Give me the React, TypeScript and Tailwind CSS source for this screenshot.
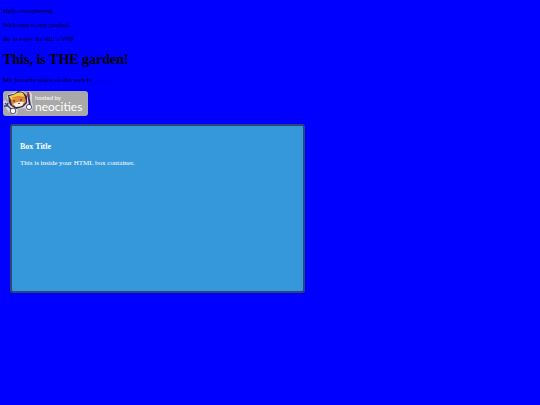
function HostedBadge() {
  return (
    <svg viewBox="0 0 85 25" className="h-[25px] w-[85px]" role="img" aria-label="Hosted by Neocities">
      <rect width="85" height="25" rx="3" fill="#a9a9a9" />
      {/* outline behind the cat */}
      <path
        d="M0 11 L2 9 L6 13 L7 11 L4 7 L5 3 L10 2 L14 0 L20 0 L24 4 L24 1 L26 0 L29 3 L29 11 L30 16 L28 20 L24 20 L22 17 L15 18 L14 23 L10 24 L6 21 L3 17 Z"
        fill="#d8d6e6"
      />
      <path d="M6 11 L5 4 L11 3 L15 0 L20 1 L24 5 L24 12 L20 16 L13 18 L7 14 Z" fill="#30284c" />
      <path d="M8 10 L9 6 L16 4 L22 6 L23 11 L19 15 L13 16 L9 14 Z" fill="#e58a37" />
      <path d="M6 5 L10 4 Q16 0 20 2 L22 6 Q15 4 8 9 Z" fill="#f2cc4c" />
      <path d="M9 7 Q15 4 22 7" stroke="#c66b25" strokeWidth="0.8" fill="none" />
      <path d="M10 13 Q15 10 21 11 L19 15 L13 16 Z" fill="#faf0e2" />
      <path d="M11 9 v2 M18 8 v2" stroke="#241d38" strokeWidth="1" />
      <path d="M15 12 l1 1 l1 -1" stroke="#241d38" strokeWidth="0.7" fill="none" />
      <path d="M25 3 L27 14" stroke="#30284c" strokeWidth="1.8" />
      <path d="M25 1 L26 6" stroke="#a8283e" strokeWidth="2" />
      <path d="M2 12 L9 19 M1 15 L4 15 L5 12" stroke="#3b4468" strokeWidth="1.4" fill="none" />
      <circle cx="10" cy="20" r="2.8" fill="#fff" stroke="#30284c" strokeWidth="0.8" />
      <circle cx="26" cy="16" r="2.6" fill="#fff" stroke="#30284c" strokeWidth="0.8" />
      <text x="32" y="9" fontSize="6" fill="#fff" className="font-[Lato,sans-serif]">
        hosted by
      </text>
      <text x="32" y="20" fontSize="12" fill="#fff" className="font-[Lato,sans-serif]">
        neocities
      </text>
    </svg>
  );
}

function App() {
  return (
    <main className="min-h-screen bg-[#0000ff] px-[3px] pt-[7px] font-['Liberation_Serif',serif] text-[7px] leading-[8px] text-black">
      <div className="flex flex-col gap-[6px]">
        <p>Hello everybunny</p>
        <p>Welcome to my garden!</p>
        <p>Be at ease! Its still a WIP</p>
      </div>
      <h1 className="mt-[9px] text-[14px] leading-[16px] font-bold">This, is THE garden!</h1>
      <p className="mt-[8px]">
        My favorite place on the web is{" "}
        <a href="#" className="text-[#0000ee] underline">neocities</a>
      </p>
      <a href="#" className="mt-[7px] block w-fit">
        <HostedBadge />
      </a>
      <section className="mt-[8px] ml-[7px] min-h-[169px] w-[295px] max-w-full rounded-[3px] border-2 border-[#2c4678] bg-[#3498db] px-[8px] pt-[16px] text-white">
        <h3 className="text-[8px] leading-[10px] font-bold">Box Title</h3>
        <p className="mt-[7px]">This is inside your HTML box container.</p>
      </section>
    </main>
  );
}

export default App;
